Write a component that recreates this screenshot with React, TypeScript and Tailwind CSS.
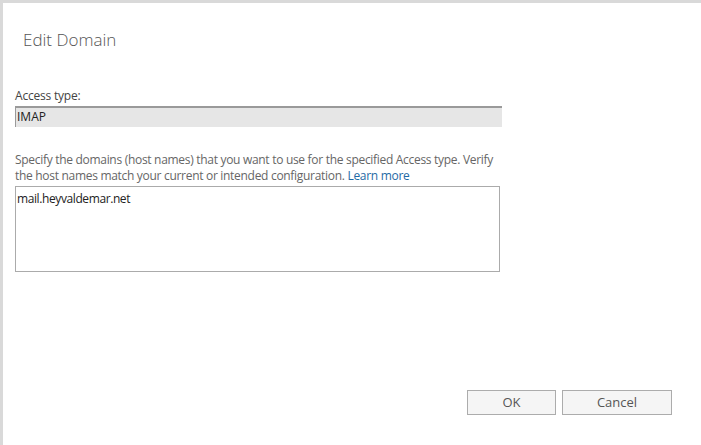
export default function App() {
  return (
    <div
      className="w-[701px] h-[445px] bg-white border-t-[3px] border-l-[3px] border-[#d9d9d9] flex flex-col text-[#333]"
      style={{ fontFamily: '"Segoe UI", "Open Sans", "Liberation Sans", sans-serif' }}
    >
      {/* Title */}
      <h1 className="pl-[20px] pt-[26px] text-[17px] font-light text-[#555] leading-[22px]">Edit Domain</h1>

      <div className="pl-[12px] pr-[199px] pt-[37px] flex flex-col">
        <label className="text-[12px] leading-[16px] text-[#444] tracking-[-0.2px]">Access type:</label>
        <div className="mt-[2px] h-[21px] bg-[#e6e6e6] border-t-2 border-l border-[#9a9a9a] text-[12px] leading-[18px] text-[#222] pl-[1px]">
          IMAP
        </div>

        <p className="mt-[25px] text-[12px] leading-[16px] text-[#666] tracking-[-0.3px] whitespace-nowrap">
          Specify the domains (host names) that you want to use for the specified Access type. Verify
          <br />
          the host names match your current or intended configuration.{" "}
          <a href="#" className="text-[#1f6aa5]">
            Learn more
          </a>
        </p>
        <div className="mt-[2px] mr-[2px] h-[86px] border border-[#ababab] text-[12px] leading-[18px] text-[#222] tracking-[-0.4px] px-[1px] pt-[3px]">
          mail.heyvaldemar.net
        </div>
      </div>

      {/* Buttons */}
      <div className="mt-auto mb-[30px] pr-[29px] flex justify-end gap-[6px]">
        <button className="w-[89px] h-[25px] bg-[#f5f5f5] border border-[#acacac] text-[13px] text-[#555]">OK</button>
        <button className="w-[110px] h-[25px] bg-[#f5f5f5] border border-[#acacac] text-[13px] text-[#555]">Cancel</button>
      </div>
    </div>
  );
}
